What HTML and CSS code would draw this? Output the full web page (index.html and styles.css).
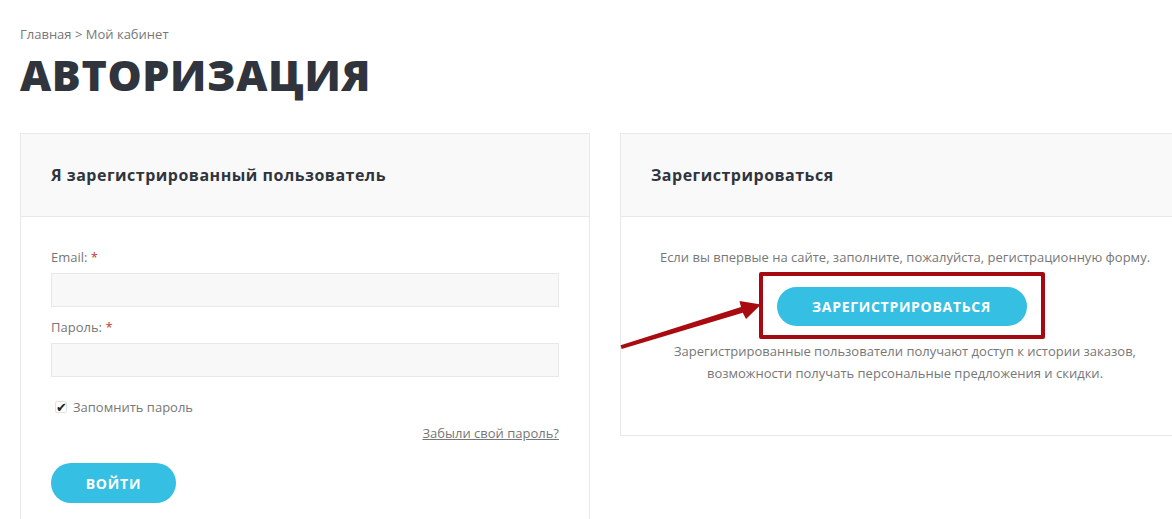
FILE: index.html
```html
<!DOCTYPE html>
<html lang="ru">
<head>
    <meta charset="UTF-8">
    <meta name="viewport" content="width=device-width, initial-scale=1.0">
    <title>Авторизация</title>
    <link rel="stylesheet" href="styles.css">
</head>
<body>
    <div class="page">
        <div class="breadcrumbs">
            <a href="#">Главная</a> <span class="sep">&gt;</span> <span>Мой кабинет</span>
        </div>
        <h1 class="title">Авторизация</h1>

        <div class="auth">
            <!-- Login -->
            <section class="card">
                <div class="card-head">
                    <h2>Я зарегистрированный пользователь</h2>
                </div>
                <form class="card-body login-form">
                    <label for="email">Email: <span class="req">*</span></label>
                    <input type="text" id="email">

                    <label for="pass">Пароль: <span class="req">*</span></label>
                    <input type="password" id="pass">

                    <div class="remember">
                        <span class="check">&#10004;</span>
                        <span>Запомнить пароль</span>
                    </div>

                    <div class="forgot"><a href="#">Забыли свой пароль?</a></div>

                    <button type="submit" class="btn">Войти</button>
                </form>
            </section>

            <!-- Register -->
            <section class="card card-register">
                <div class="card-head">
                    <h2>Зарегистрироваться</h2>
                </div>
                <div class="card-body register-body">
                    <p class="intro">Если вы впервые на сайте, заполните, пожалуйста, регистрационную форму.</p>
                    <div class="highlight">
                        <button type="button" class="btn btn-wide">Зарегистрироваться</button>
                    </div>
                    <p class="note">Зарегистрированные пользователи получают доступ к истории заказов,<br>возможности получать персональные предложения и скидки.</p>
                </div>
                <svg class="arrow" width="150" height="60" viewBox="0 0 150 60">
                    <polygon points="1.6,51.2 122,13 120.5,7 142,10.5 127,25 123.8,18.8 2.6,55" fill="#a80b10"/>
                </svg>
            </section>
        </div>
    </div>
</body>
</html>
```

FILE: styles.css
```css
* {
    box-sizing: border-box;
    margin: 0;
    padding: 0;
}

html, body {
    overflow: hidden;
}

body {
    font-family: 'Open Sans', 'Noto Sans', sans-serif;
    font-size: 13px;
    color: #777;
    background: #fff;
}

.page {
    padding: 25px 0 0 20px;
}

.breadcrumbs {
    font-size: 13px;
    line-height: 18px;
    color: #777;
}

.breadcrumbs a {
    color: #777;
    text-decoration: none;
}

.title {
    margin-top: 4px;
    font-size: 43px;
    line-height: 56px;
    font-weight: 800;
    letter-spacing: 0.6px;
    text-transform: uppercase;
    color: #30343c;
}

.auth {
    display: grid;
    grid-template-columns: 570px 570px;
    gap: 30px;
    width: 1170px;
    margin-top: 30px;
}

.card {
    border: 1px solid #e9e9e9;
    background: #fff;
    align-self: start;
}

.card-register {
    position: relative;
}

.card-head {
    height: 83px;
    background: #f9f9f9;
    border-bottom: 1px solid #e9e9e9;
    display: flex;
    align-items: center;
    padding: 0 30px;
}

.card-head h2 {
    font-size: 16px;
    font-weight: 700;
    color: #30343c;
    letter-spacing: 0.5px;
}

.card-body {
    padding: 31px 30px 16px;
}

.login-form label {
    display: block;
    line-height: 18px;
    margin-bottom: 7px;
    color: #777;
}

.req {
    color: #c0392b;
}

.login-form input {
    display: block;
    width: 100%;
    height: 34px;
    border: 1px solid #e8e8e8;
    background: #f8f8f8;
    margin-bottom: 11px;
    font-family: inherit;
    outline: none;
}

.remember {
    display: flex;
    align-items: center;
    gap: 6px;
    margin: 21px 0 0 4px;
    line-height: 18px;
}

.check {
    width: 12px;
    height: 12px;
    border: 1px solid #e2e2e2;
    border-radius: 2px;
    font-size: 13px;
    line-height: 10px;
    color: #222;
}

.forgot {
    text-align: right;
    margin-top: 8px;
    line-height: 18px;
}

.forgot a {
    color: #777;
}

.btn {
    display: inline-block;
    height: 40px;
    padding: 0 35px;
    border: none;
    border-radius: 20px;
    background: #35bfe3;
    color: #fff;
    font-family: inherit;
    font-size: 14px;
    font-weight: 700;
    letter-spacing: 0.8px;
    text-transform: uppercase;
    cursor: pointer;
}

.login-form .btn {
    margin-top: 21px;
    width: 125px;
    padding: 0;
}

.register-body {
    text-align: center;
    padding-bottom: 51px;
}

.intro {
    line-height: 18px;
}

.highlight {
    display: inline-block;
    margin-top: 6px;
    margin-right: 7px;
    padding: 11px 14px 9px;
    border: 4px solid #a50a12;
    border-radius: 2px;
}

.btn-wide {
    width: 250px;
    padding: 0;
    height: 39px;
    letter-spacing: 0.7px;
}

.note {
    margin-top: 1px;
    line-height: 22px;
}

.arrow {
    position: absolute;
    left: -2px;
    top: 160px;
}
```
